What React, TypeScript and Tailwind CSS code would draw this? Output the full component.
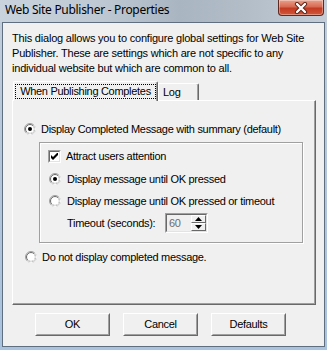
import React from "react";

function Radio({ checked }: { checked?: boolean }) {
  return (
    <svg width="12" height="12" viewBox="0 0 12 12" className="shrink-0">
      <circle cx="6" cy="6" r="5.5" fill="none" stroke="#a0a0a0" />
      <path d="M9.89 2.11A5.5 5.5 0 0 1 2.11 9.89" fill="none" stroke="#ffffff" />
      <circle cx="6" cy="6" r="4.5" fill="#ffffff" stroke="#696969" />
      <path d="M9.18 2.82A4.5 4.5 0 0 1 2.82 9.18" fill="none" stroke="#e3e3e3" />
      {checked && <circle cx="6" cy="6" r="2" fill="#000" />}
    </svg>
  );
}

function Check() {
  return (
    <div className="w-[13px] h-[13px] shrink-0 border border-t-[#a0a0a0] border-l-[#a0a0a0] border-r-white border-b-white">
      <div className="w-full h-full border border-t-[#696969] border-l-[#696969] border-r-[#e3e3e3] border-b-[#e3e3e3] bg-white flex items-center justify-center">
        <svg width="7" height="7" viewBox="0 0 7 7">
          <polygon points="0,2 2,4 6,0 7,0 7,2 2,7 0,5" fill="#000" />
        </svg>
      </div>
    </div>
  );
}

function Btn({ children }: { children: React.ReactNode }) {
  return (
    <div className="w-[75px] h-[23px] border border-t-white border-l-white border-r-[#696969] border-b-[#696969]">
      <div className="w-full h-full border border-t-[#f0f0f0] border-l-[#f0f0f0] border-r-[#a0a0a0] border-b-[#a0a0a0] flex items-center justify-center">
        {children}
      </div>
    </div>
  );
}

function SpinBox() {
  return (
    <div className="w-[43px] h-[20px] border border-t-[#a0a0a0] border-l-[#a0a0a0] border-r-white border-b-white">
      <div className="w-full h-full border border-t-[#696969] border-l-[#696969] border-r-[#e3e3e3] border-b-[#e3e3e3] bg-[#f0f0f0] flex items-stretch">
        <div className="flex-1 pl-[2px] flex items-center text-[#6d6d6d]">60</div>
        <div className="w-[15px] flex flex-col">
          <div className="flex-1 border border-t-white border-l-white border-r-[#696969] border-b-[#696969] flex items-center justify-center">
            <svg width="7" height="4" viewBox="0 0 7 4">
              <polygon points="3.5,0 7,4 0,4" fill="#000" />
            </svg>
          </div>
          <div className="flex-1 border border-t-white border-l-white border-r-[#696969] border-b-[#696969] flex items-center justify-center">
            <svg width="7" height="4" viewBox="0 0 7 4">
              <polygon points="0,0 7,0 3.5,4" fill="#000" />
            </svg>
          </div>
        </div>
      </div>
    </div>
  );
}

export default function App() {
  return (
    <div className="w-[327px] h-[350px] overflow-hidden flex flex-col bg-[linear-gradient(180deg,#c3ceda_0%,#b4c6da_50%,#a9c2de_100%)]">
      {/* Title bar */}
      <div className="h-[22px] flex items-start shrink-0 bg-[linear-gradient(90deg,#c9d3dd_0%,#bec9d4_30%,#a9b5c1_55%,#b2bdc8_75%,#c5ced8_100%)]">
        <div className="pl-[5px] pt-[2px] text-[12px] leading-[16px] tracking-[-0.3px] text-black font-['Noto_Sans',sans-serif]">
          Web Site Publisher - Properties
        </div>
        <div className="ml-auto mr-[3px] w-[46px] h-[16px] rounded-b-[4px] border border-t-0 border-[#5e2a22] bg-[linear-gradient(180deg,#eaa08c_0%,#d86a52_45%,#c23a22_55%,#d2583a_100%)] flex items-center justify-center shadow-[inset_0_0_0_1px_rgba(255,255,255,0.35)]">
          <svg width="14" height="12" viewBox="0 0 14 12">
            <path d="M3 2 L11 10 M11 2 L3 10" stroke="#5a2418" strokeWidth="4.2" strokeLinecap="round" />
            <path d="M3 2 L11 10 M11 2 L3 10" stroke="#ffffff" strokeWidth="2.4" strokeLinecap="round" />
          </svg>
        </div>
      </div>

      {/* Client area */}
      <div className="mx-[2px] border border-[#5f6f80] shrink-0">
        <div className="h-[323px] bg-[#f0f0f0] flex flex-col text-[11px] tracking-[-0.3px] text-black font-['Liberation_Sans',Arial,sans-serif]">
          <p className="pt-[8px] pl-[9px] pr-[6px] leading-[15px] tracking-[-0.2px]">
            This dialog allows you to configure global settings for Web Site Publisher. These are settings which are not specific to any individual website but which are common to all.
          </p>

          {/* Tabs */}
          <div className="mt-[5px] ml-[10px] h-[19px] flex items-end">
            <div className="relative z-10 -mb-px w-[145px] h-[20px] bg-[#f0f0f0] border-l border-t border-r border-l-white border-t-white border-r-[#696969] rounded-tl-[2px] rounded-tr-[2px] shadow-[inset_-1px_0_0_#a0a0a0] pt-[2px] px-[1px]">
              <div className="h-[15px] border border-dotted border-black flex items-center justify-center leading-[13px]">
                When Publishing Completes
              </div>
            </div>
            <div className="w-[41px] h-[17px] border-l border-t border-r border-l-white border-t-white border-r-[#696969] rounded-tr-[2px] shadow-[inset_-1px_0_0_#a0a0a0] pl-[4px] flex items-center leading-[13px]">
              Log
            </div>
          </div>

          {/* Panel */}
          <div className="ml-[9px] w-[304px] h-[205px] border border-t-white border-l-white border-r-[#696969] border-b-[#696969] shadow-[inset_-1px_-1px_0_#a0a0a0] pt-[20px] pl-[11px] flex flex-col">
            <div className="h-[16px] flex items-center gap-[5px]">
              <Radio checked />
              <span>Display Completed Message with summary (default)</span>
            </div>

            <div className="mt-[5px] ml-[15px] w-[264px] h-[101px] border border-[#a0a0a0] shadow-[inset_1px_1px_0_#fff,1px_1px_0_#fff] pt-[5px] pl-[8px] flex flex-col">
              <div className="h-[16px] flex items-center gap-[5px]">
                <Check />
                <span>Attract users attention</span>
              </div>
              <div className="mt-[7px] h-[16px] flex items-center gap-[6px] pl-[1px]">
                <Radio checked />
                <span>Display message until OK pressed</span>
              </div>
              <div className="mt-[6px] h-[16px] flex items-center gap-[6px] pl-[1px]">
                <Radio />
                <span>Display message until OK pressed or timeout</span>
              </div>
              <div className="mt-[4px] h-[20px] flex items-center pl-[19px]">
                <span className="w-[98px]">Timeout (seconds):</span>
                <SpinBox />
              </div>
            </div>

            <div className="mt-[6px] h-[16px] flex items-center gap-[5px] pl-[1px]">
              <Radio />
              <span>Do not display completed message.</span>
            </div>
          </div>

          {/* Buttons */}
          <div className="mt-[8px] pl-[32px] flex gap-[13px]">
            <Btn>OK</Btn>
            <Btn>Cancel</Btn>
            <Btn>Defaults</Btn>
          </div>
        </div>
      </div>
    </div>
  );
}
